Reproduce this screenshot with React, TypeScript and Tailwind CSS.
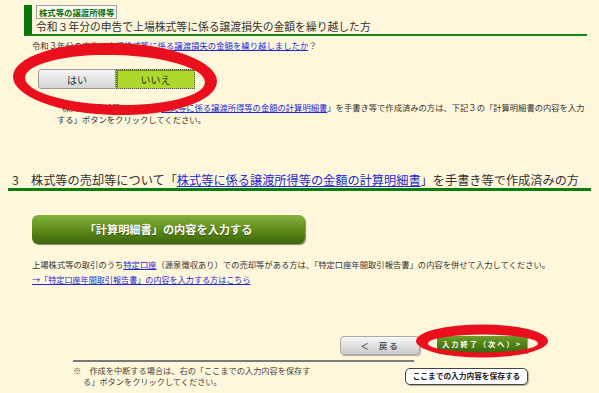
import React from "react";

const link = "text-[#1d2bd6] underline";

function Toggle() {
  return (
    <div className="ml-[14px] mt-[18px] flex h-[20px]">
      <div className="flex w-[78px] items-center justify-center rounded-l-[3px] border border-[#9a9a9a] bg-gradient-to-b from-[#f6f6f6] to-[#d4d4d4] text-[10px] text-[#333]">
        はい
      </div>
      <div className="flex w-[79px] items-center justify-center border border-dotted border-[#555] bg-[#aed82e] text-[10px] text-[#333] shadow-[inset_1px_1px_0_#6d8a14]">
        いいえ
      </div>
    </div>
  );
}

function Annotations() {
  return (
    <svg className="pointer-events-none absolute inset-0" width="599" height="393" viewBox="0 0 599 393">
      <path
        fillRule="evenodd"
        fill="#ea0f1c"
        transform="rotate(1.5 115 79)"
        d="M13 79a102 36 0 1 0 204 0a102 36 0 1 0 -204 0z M25 80a90 25 0 1 0 180 0a90 25 0 1 0 -180 0z"
      />
      <path
        fillRule="evenodd"
        fill="#ea0f1c"
        d="M416 341a66 16.5 0 1 0 132 0a66 16.5 0 1 0 -132 0z M428 343.5a55 9 0 1 0 110 0a55 9 0 1 0 -110 0z"
      />
    </svg>
  );
}

export default function App() {
  return (
    <div className="relative h-[393px] w-[599px] overflow-hidden bg-[#fef7dc] pt-[5px] font-['Noto_Sans_CJK_JP',sans-serif] text-[#333]">
      {/* section 1 */}
      <div className="ml-[24px] mr-[12px]">
        <div className="border-b-2 border-l-[8px] border-[#13860f] border-l-[#0a760a] pl-[4px]">
          <div className="h-[14px] w-fit border border-[#a0a0a0] bg-[#fbfbf4] px-[2px] text-[8.4px] font-bold leading-[12px] text-[#0b6e0b]">
            株式等の譲渡所得等
          </div>
          <div className="text-[10.8px] leading-[15px] text-[#333]">
            令和３年分の申告で上場株式等に係る譲渡損失の金額を繰り越した方
          </div>
        </div>
        <p className="mt-[3px] pl-[8px] text-[8.4px] leading-[12px]">
          令和３年分の申告で<span className={link}>上場株式等に係る譲渡損失の金額を繰り越しましたか</span>？
        </p>
        <Toggle />
        <p className="ml-[33px] mt-[12px] whitespace-nowrap text-[8.3px] leading-[12px]">
          <span className="pl-[5px]">
            株式等の売却等について「<span className={link}>株式等に係る譲渡所得等の金額の計算明細書</span>」を手書き等で作成済みの方は、下記３の「計算明細書の内容を入力
          </span>
          <br />
          する」ボタンをクリックしてください。
        </p>
      </div>

      {/* section 3 */}
      <div className="mx-[8px] mt-[47px] border-b-[3px] border-[#0e7d0e] pl-[4px] text-[12.2px] leading-[16px] whitespace-nowrap">
        3　株式等の売却等について「<span className={link}>株式等に係る譲渡所得等の金額の計算明細書</span>」を手書き等で作成済みの方
      </div>

      <div className="ml-[32px] mt-[24px] flex h-[29px] w-[273px] items-center justify-center rounded-[6px] bg-gradient-to-b from-[#86b23c] via-[#5d8d1b] to-[#3b6609] text-[11.2px] font-bold text-white shadow-[1px_1px_1px_rgba(0,0,0,0.45)] [text-shadow:0_1px_1px_rgba(0,0,0,0.4)]">
        「計算明細書」の内容を入力する
      </div>

      <p className="ml-[32px] mt-[14px] whitespace-nowrap text-[8.3px] leading-[12px]">
        上場株式等の取引のうち<span className={link}>特定口座</span>（源泉徴収あり）での売却等がある方は、「特定口座年間取引報告書」の内容を併せて入力してください。
      </p>
      <p className="ml-[32px] mt-[4px] text-[8.1px] leading-[12px]">
        <span className={link}>→「特定口座年間取引報告書」の内容を入力する方はこちら</span>
      </p>

      {/* footer */}
      <div className="ml-[340px] mt-[50px] flex gap-[17px]">
        <div className="flex h-[19px] w-[80px] items-center justify-center gap-[10px] rounded-[4px] border border-[#a8a8a8] bg-gradient-to-b from-[#f8f8f8] to-[#cacaca] text-[8.5px] font-bold text-[#555] shadow-[1px_1px_1px_rgba(0,0,0,0.3)]">
          <span>＜</span>
          <span className="tracking-[2px]">戻る</span>
        </div>
        <div className="flex h-[17px] w-[90px] items-center justify-center bg-gradient-to-b from-[#6f9d27] via-[#4f8015] to-[#3a650a] text-[7.2px] font-bold tracking-[2px] text-white shadow-[1px_1px_1px_rgba(0,0,0,0.35)]">
          入力終了（次へ）&gt;
        </div>
      </div>
      <div className="ml-[73px] mt-[5px] h-[1.5px] w-[341px] bg-[#7a7a7a]" />
      <div className="mt-[3px] flex">
        <p className="ml-[73px] w-[250px] whitespace-nowrap text-[8.2px] leading-[11px] text-[#444]">
          ※　作成を中断する場合は、右の「ここまでの入力内容を保存す
          <br />
          <span className="pl-[10px]">る」ボタンをクリックしてください。</span>
        </p>
        <div className="ml-[82px] mt-[3px] flex h-[17px] w-[123px] items-center justify-center rounded-[5px] border border-[#444] bg-white text-[7.7px] font-bold text-[#222] shadow-[1px_1px_1px_rgba(0,0,0,0.3)]">
          ここまでの入力内容を保存する
        </div>
      </div>

      <Annotations />
    </div>
  );
}
